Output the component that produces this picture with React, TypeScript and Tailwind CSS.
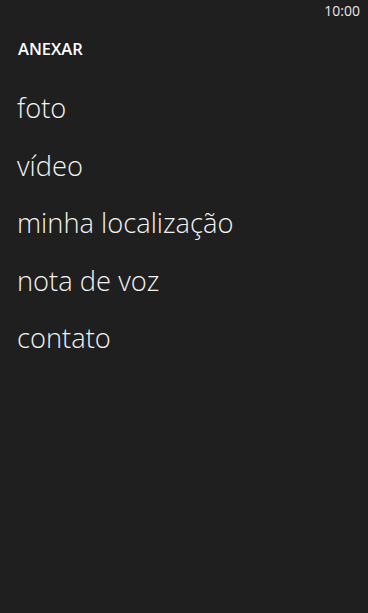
import React from "react";

const items = ["foto", "vídeo", "minha localização", "nota de voz", "contato"];

export default function App() {
  return (
    <div
      className="w-[368px] h-[613px] bg-[#1f1f1f] text-white flex flex-col"
      style={{ fontFamily: '"Open Sans", "Noto Sans", sans-serif' }}
    >
      <div className="h-[28px] flex justify-end items-start pr-[8px] pt-[2px]">
        <span className="text-[14px] leading-[18px] text-[#e6e6e6]">10:00</span>
      </div>
      <div className="pl-[18px] pt-[11px] text-[16.5px] leading-[20px] font-semibold">
        ANEXAR
      </div>
      <div className="flex flex-col pl-[17px] pt-[32px]">
        {items.map((t) => (
          <div key={t} className="h-[57.5px] text-[27.3px] leading-[34px] font-light text-[#f2f2f2]">
            {t}
          </div>
        ))}
      </div>
    </div>
  );
}
